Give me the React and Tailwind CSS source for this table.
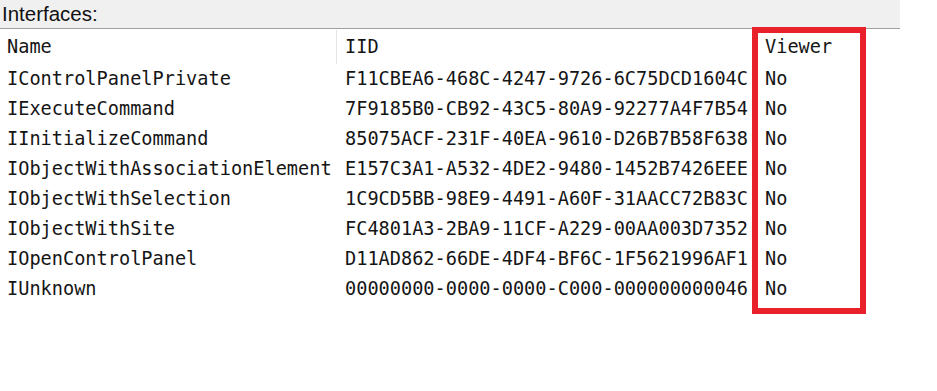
import React from 'react';

const rows = [
  ['IControlPanelPrivate', 'F11CBEA6-468C-4247-9726-6C75DCD1604C', 'No'],
  ['IExecuteCommand', '7F9185B0-CB92-43C5-80A9-92277A4F7B54', 'No'],
  ['IInitializeCommand', '85075ACF-231F-40EA-9610-D26B7B58F638', 'No'],
  ['IObjectWithAssociationElement', 'E157C3A1-A532-4DE2-9480-1452B7426EEE', 'No'],
  ['IObjectWithSelection', '1C9CD5BB-98E9-4491-A60F-31AACC72B83C', 'No'],
  ['IObjectWithSite', 'FC4801A3-2BA9-11CF-A229-00AA003D7352', 'No'],
  ['IOpenControlPanel', 'D11AD862-66DE-4DF4-BF6C-1F5621996AF1', 'No'],
  ['IUnknown', '00000000-0000-0000-C000-000000000046', 'No'],
];

const App = () => {
  return (
    <div className="relative w-[937px] h-[391px] bg-white overflow-hidden">
      {/* Section title bar */}
      <div className="w-[900px] h-[29px] bg-[#f0f0f0] border-b border-[#a0a0a0] pl-[2px] flex items-end text-[20.5px] leading-none text-[#111] font-['Liberation_Sans',sans-serif] pb-[4px]">
        Interfaces:
      </div>

      {/* List view */}
      <div className="mt-[1px] font-['DejaVu_Sans_Mono',monospace] text-[18.6px] text-[#151515]">
        <div className="grid grid-cols-[337px_420px_1fr] h-[34px] items-center">
          <div className="pl-[7px] h-full flex items-center border-r border-[#e5e5e5]">Name</div>
          <div className="pl-[8px]">IID</div>
          <div className="pl-[8px]">Viewer</div>
        </div>
        {rows.map(([name, iid, viewer]) => (
          <div key={name} className="grid grid-cols-[337px_420px_1fr] h-[30px] items-center">
            <div className="pl-[7px] whitespace-nowrap">{name}</div>
            <div className="pl-[8px] whitespace-nowrap">{iid}</div>
            <div className="pl-[8px]">{viewer}</div>
          </div>
        ))}
      </div>

      {/* Red highlight annotation */}
      <div className="absolute left-[752px] top-[27px] w-[114px] h-[287px] border-[6px] border-[#e8212b]" />
    </div>
  );
};

export default App;
